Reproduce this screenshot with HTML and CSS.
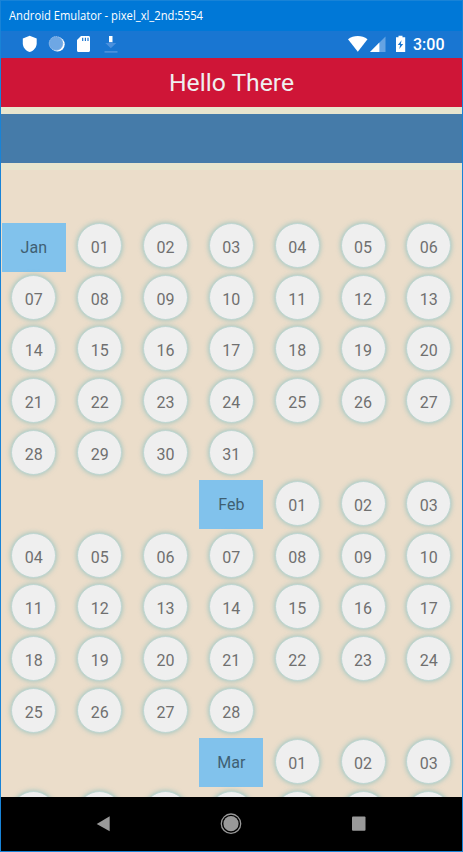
FILE: index.html
```html
<!DOCTYPE html>
<html lang="en">
<head>
<meta charset="utf-8">
<title>Android Emulator</title>
<link rel="stylesheet" href="styles.css">
</head>
<body>
<div class="window">
  <div class="titlebar"><svg class="window-title" width="220" height="24"><text x="0" y="16" textLength="194" lengthAdjust="spacingAndGlyphs">Android Emulator - pixel_xl_2nd:5554</text></svg></div>
  <div class="statusbar">
    <svg class="notifications" width="110" height="26" viewBox="0 0 110 26">
      <path fill="#fff" d="M8.700 4.800l7 2.600v4.800c0 4-2.700 7.300-7 8.900C4.400 19.500 1.800 16.200 1.800 12.200V7.400z"/>
      <circle cx="36.500" cy="13.300" r="7.200" fill="#fff"/>
      <circle cx="35" cy="12.400" r="7.100" fill="#6ea7e4"/>
      <circle cx="35" cy="12.400" r="6.800" fill="none" stroke="#9cc2ec" stroke-width="1" stroke-dasharray="1 1"/>
      <path fill="#fff" d="M60 5h7.500c.9 0 1.500.6 1.500 1.500v12.900c0 .9-.6 1.500-1.500 1.500h-10c-.9 0-1.500-.6-1.500-1.500V9z"/>
      <path stroke="#1976d2" stroke-width="1.200" d="M61.700 6.800v3.200M64.400 6.800v3.200M67 6.800v3.200"/>
      <path fill="#fff" d="M88 5h3.500v6H88z"/>
      <path fill="#4a90dd" d="M87.800 11h4v1h3.500l-5.500 5.300-5.500-5.300h3.500zM83.500 20h13v1.700h-13z"/>
    </svg>
    <svg class="indicators" width="60" height="26" viewBox="0 0 60 26">
      <path fill="#fff" d="M0 8.300C5.500 3.900 14 3.900 19.500 8.300L9.800 20.700z"/>
      <path fill="#65a3e3" d="M37.500 5.500v15.500H22z"/>
      <path fill="#fff" d="M31.400 11.600v9.400H22z"/>
      <path fill="#fff" d="M50.500 4.700h4v1.600h2.700V21h-9.200V6.300h2.500z"/>
      <path fill="#1976d2" d="M53.600 9.300l-3.800 4.600h2.300l-.8 4.200 3.900-5h-2.400z"/>
    </svg>
    <span class="clock">3:00</span>
  </div>
  <main class="screen">
    <header class="heading">Hello There</header>
    <div class="banner"></div>
    <div class="calendar" id="calendar"></div>
  </main>
  <nav class="navbar">
    <svg width="461" height="54" viewBox="0 0 461 54">
      <path fill="#999" d="M95.700 27l13-7.700v15z"/>
      <circle cx="230" cy="26.700" r="7.600" fill="#999"/>
      <circle cx="230" cy="26.700" r="9.700" fill="none" stroke="#999" stroke-width="1.300"/>
      <rect x="351" y="19.500" width="13.500" height="14.200" rx="1" fill="#999"/>
    </svg>
  </nav>
</div>
<script src="calendar.js"></script>
</body>
</html>
```
FILE: styles.css
```css
* { box-sizing: border-box; }
body { margin: 0; font-family: Roboto, "Liberation Sans", sans-serif; }
.window {
  width: 463px;
  height: 852px;
  border: 1px solid #1883d7;
  display: flex;
  flex-direction: column;
  overflow: hidden;
}
.titlebar { flex: none; height: 30px; padding: 3px 8px; background: #0078d7; }
.window-title { display: block; font: 12px "Open Sans", sans-serif; fill: #fff; }
.statusbar {
  flex: none;
  height: 27px;
  padding: 0 18px 0 20px;
  background: #1976d2;
  display: flex;
  align-items: flex-start;
}
.notifications, .indicators { display: block; flex: none; }
.indicators { margin-left: auto; }
.clock {
  width: 31px;
  margin-left: 5px;
  line-height: 28px;
  font-size: 16px;
  font-weight: 500;
  color: #fff;
}
.screen { flex: 1; min-height: 0; overflow: hidden; background: #ebddca; }
.heading {
  height: 49px;
  line-height: 50px;
  background: #cf1537;
  color: #efefef;
  font-size: 24.700px;
  text-align: center;
}
.banner {
  height: 63px;
  border: solid #e7e5ce;
  border-width: 7px 0;
  background: #457ba9;
}
.calendar {
  margin-top: 52px;
  display: grid;
  grid-template-columns: repeat(7, 65.857px);
  grid-auto-rows: 51.600px;
}
.day, .month {
  font-size: 16px;
  text-align: center;
}
.day {
  width: 45px;
  height: 45px;
  margin: 1.300px 0 0 10.300px;
  border: 1px solid #bfd6d1;
  border-radius: 50%;
  background: #efefef;
  box-shadow: 0 0 4px 1px rgba(120, 185, 190, .55);
  color: #707070;
  line-height: 47px;
}
.month {
  width: 64px;
  height: 49px;
  margin: .500px 0 0 .800px;
  background: #81c2ec;
  color: #3f5f73;
  line-height: 50px;
}
.navbar { flex: none; height: 54px; background: #000; }
.navbar svg { display: block; }
```
FILE: calendar.js
```js
const calendar = document.getElementById("calendar");
const months = [
  { name: "Jan", column: 1, days: 31 },
  { name: "Feb", column: 4, days: 28 },
  { name: "Mar", column: 4, days: 3 }
];

function addCell(className, text) {
  const cell = document.createElement("div");
  cell.className = className;
  cell.textContent = text;
  calendar.append(cell);
  return cell;
}

for (const month of months) {
  addCell("month", month.name).style.gridColumnStart = month.column;
  for (let day = 1; day <= month.days; day++) {
    addCell("day", String(day).padStart(2, "0"));
  }
}

// The next row only peeks in above the navigation bar, so its cells stay blank.
for (let i = 0; i < 7; i++) {
  addCell("day", "");
}
```
